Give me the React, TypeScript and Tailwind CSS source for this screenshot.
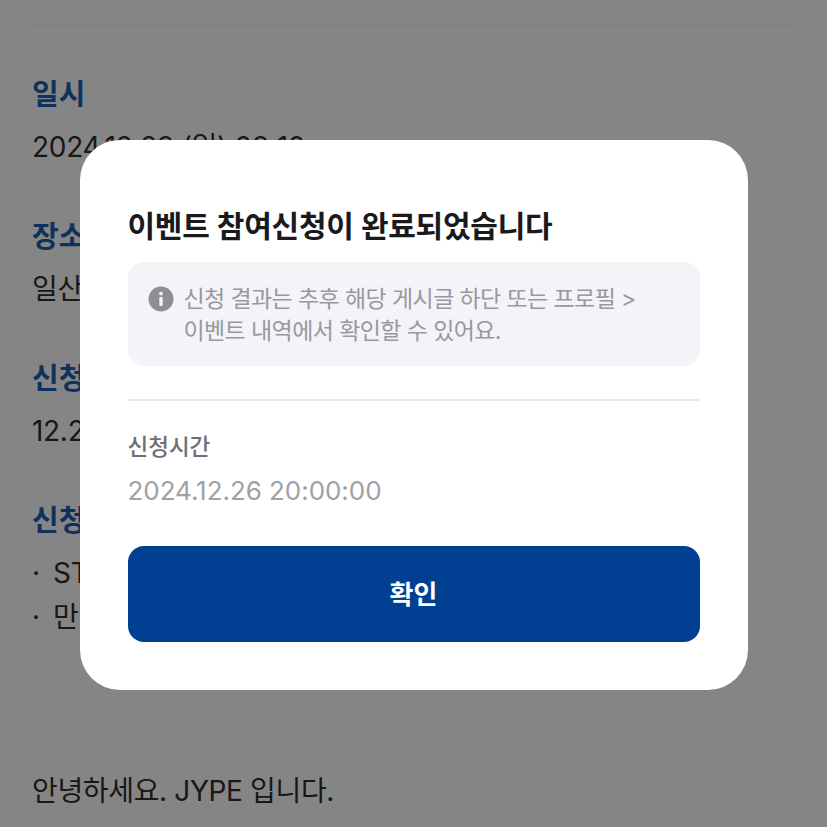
const font = { fontFamily: 'Inter, "Noto Sans CJK KR", sans-serif' }

function Section({ title, lines, bullet }: { title: string; lines: string[]; bullet?: boolean }) {
  return (
    <div className="mb-12">
      <h3 className="text-[29px] leading-[40px] font-bold text-[#1e5fb5]">{title}</h3>
      <div className="mt-[10px]">
        {lines.map((line) => (
          <p key={line} className="flex text-[28px] leading-[44px] tracking-[-0.3px] text-[#2f2f31]">
            {bullet && <span className="w-[21px] shrink-0">·</span>}
            {line}
          </p>
        ))}
      </div>
    </div>
  )
}

function InfoIcon() {
  return (
    <svg viewBox="0 0 26 26" className="w-[26px] h-[26px] mt-[3px] shrink-0">
      <circle cx="13" cy="13" r="12.5" fill="#8e8e93" />
      <circle cx="13" cy="7.6" r="1.9" fill="#f3f3f8" />
      <rect x="11.3" y="11" width="3.4" height="9" rx="1" fill="#f3f3f8" />
    </svg>
  )
}

export default function App() {
  return (
    <div className="relative h-[827px] overflow-hidden bg-white" style={font}>
      {/* Page behind */}
      <div className="px-8 pt-6">
        <div className="border-t border-[#f3f3f6] pt-[50px] pb-[14px]">
          <Section title="일시" lines={['2024.12.29 (일) 09:10']} />
          <Section title="장소" lines={['일산 킨텍스']} />
          <Section title="신청기간" lines={['12.26 20:00']} />
          <Section title="신청대상" lines={['STAY', '만 14세 이상']} bullet />
        </div>
        <div className="border-t border-[#f3f3f6] pt-[67px]">
          <p className="text-[28px] leading-[44px] tracking-[-0.35px] text-[#2f2f31]">안녕하세요. JYPE 입니다.</p>
        </div>
      </div>

      {/* Backdrop */}
      <div className="absolute inset-0 z-10 flex items-start justify-center bg-black/48 pt-[140px]">
        <div className="w-[668px] h-[550px] rounded-[40px] bg-white px-12 pt-[66px]">
          <h2 className="text-[30px] leading-[40px] font-semibold tracking-[-0.25px] text-[#1a1a1c]">이벤트 참여신청이 완료되었습니다</h2>
          <div className="mt-4 h-[104px] rounded-2xl bg-[#f3f3f8] pl-5 pr-4 pt-[21px] flex gap-[10px]">
            <InfoIcon />
            <p className="text-[23px] leading-[32px] tracking-[-0.6px] text-[#98989d]">
              신청 결과는 추후 해당 게시글 하단 또는 프로필 &gt;<br />
              이벤트 내역에서 확인할 수 있어요.
            </p>
          </div>
          <div className="mt-[33px] border-t-2 border-[#e9e9ee]" />
          <p className="mt-[30px] text-[22.5px] leading-[32px] font-medium text-[#6e6e73]">신청시간</p>
          <p className="mt-2 text-[26px] leading-[40px] tracking-[-0.05px] text-[#a0a0a5]">2024.12.26 20:00:00</p>
          <button className="mt-[35px] w-full h-24 rounded-2xl bg-[#003f91] text-[26px] font-semibold text-white">확인</button>
        </div>
      </div>
    </div>
  )
}
